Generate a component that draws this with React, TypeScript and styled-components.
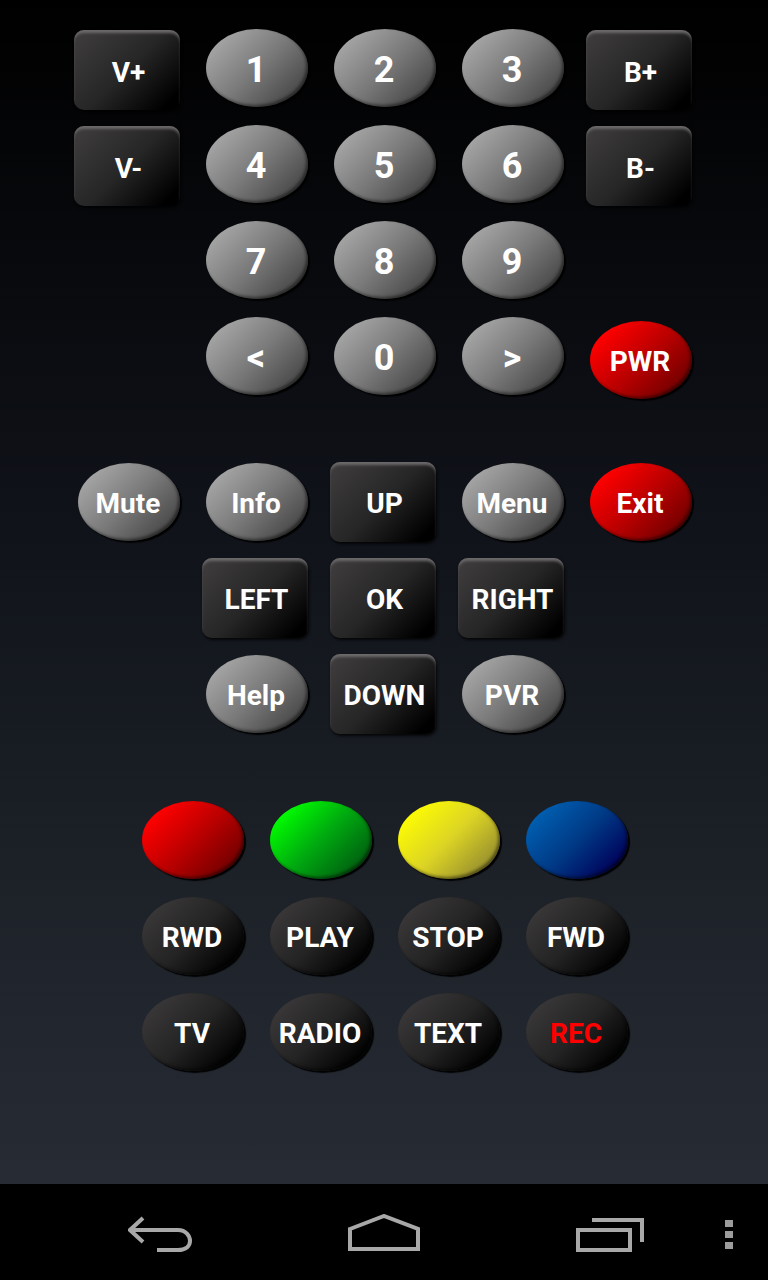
import React from 'react';
import styled, { createGlobalStyle } from 'styled-components';

const GlobalStyle = createGlobalStyle`
  html, body {
    margin: 0;
    padding: 0;
    background: #000;
  }
`;

type Tone = 'grey' | 'black' | 'red' | 'green' | 'yellow' | 'blue';

const tones: Record<Tone, string> = {
  grey: '#a8a8a8 10%, #7a7a7a 50%, #424242 92%',
  black: '#3a3838 10%, #252424 50%, #000 88%',
  red: '#ff0000 14%, #bc0000 50%, #700000 88%',
  green: '#00ff00 12%, #00a810 50%, #005810 90%',
  yellow: '#ffff00 10%, #dcd424 50%, #8c8430 92%',
  blue: '#0062b4 10%, #003a86 50%, #000058 88%',
};

// Styled components

const Screen = styled.div`
  width: 768px;
  height: 1280px;
  display: flex;
  flex-direction: column;
  overflow: hidden;
  font-family: Roboto, "Liberation Sans", sans-serif;
`;

const Panel = styled.main`
  flex: 1;
  padding-top: 20px;
  display: flex;
  flex-direction: column;
  gap: 50px;
  background: linear-gradient(180deg, #000 0%, #10131a 45%, #1d2128 75%, #272b34 100%);
`;

const Keypad = styled.section<{ $columns: number; $inset: number }>`
  display: grid;
  grid-template-columns: repeat(${({ $columns }) => $columns}, 128px);
  grid-auto-rows: 96px;
  padding-left: ${({ $inset }) => $inset}px;
`;

const Gap = styled.div``;

const Oval = styled.button<{ $tone: Tone; $lower?: boolean; $accent?: boolean }>`
  justify-self: center;
  align-self: center;
  width: 102px;
  height: 78px;
  margin: ${({ $lower }) => ($lower ? '7px 0 0' : '0')};
  padding: 4px 2px 0 0;
  border: none;
  border-radius: 50%;
  background: linear-gradient(135deg, ${({ $tone }) => tones[$tone]});
  box-shadow: 2px 2px 1px rgba(0, 0, 0, 0.95), inset -2px -2px 3px rgba(0, 0, 0, 0.45);
  color: ${({ $accent }) => ($accent ? '#ff0000' : '#fff')};
  font: 700 28px/1 Roboto, "Liberation Sans", sans-serif;
`;

const Digit = styled(Oval)`
  font-size: 36px;
`;

const Block = styled.button<{ $lower?: boolean }>`
  justify-self: end;
  align-self: center;
  width: 106px;
  height: 80px;
  margin: ${({ $lower }) => ($lower ? '4px 13px 0 0' : '-1px 13px 0 0')};
  padding: 5px 0 0 3px;
  border: none;
  border-radius: 10px;
  background: linear-gradient(135deg, #3c3a3a 8%, #272626 50%, #000 90%);
  box-shadow: inset 0 4px 3px -1px #6c6a6a, 1px 2px 3px rgba(0, 0, 0, 0.8);
  color: #fff;
  font: 700 28px/1 Roboto, "Liberation Sans", sans-serif;
`;

const NavBar = styled.nav`
  height: 96px;
  flex: none;
  box-sizing: border-box;
  padding: 30px 0 0 128px;
  display: flex;
  align-items: flex-start;
  background: #000;
`;

const NavIcon = styled.svg<{ $gap: number }>`
  display: block;
  flex: none;
  height: 40px;
  margin-right: ${({ $gap }) => $gap}px;
  fill: none;
  stroke: #a8a8a8;
  stroke-width: 4;
`;

const MenuDots = styled.div`
  display: flex;
  flex-direction: column;
  gap: 4px;
  margin-top: 6px;
`;

const MenuDot = styled.span`
  display: block;
  width: 8px;
  height: 7px;
  background: #9c9c9c;
`;

const App = () => (
  <Screen>
    <GlobalStyle />
    <Panel>
      <Keypad $columns={5} $inset={65}>
        <Block $lower>V+</Block>
        <Digit $tone="grey">1</Digit>
        <Digit $tone="grey">2</Digit>
        <Digit $tone="grey">3</Digit>
        <Block $lower>B+</Block>
        <Block $lower>V-</Block>
        <Digit $tone="grey">4</Digit>
        <Digit $tone="grey">5</Digit>
        <Digit $tone="grey">6</Digit>
        <Block $lower>B-</Block>
        <Gap />
        <Digit $tone="grey">7</Digit>
        <Digit $tone="grey">8</Digit>
        <Digit $tone="grey">9</Digit>
        <Gap />
        <Gap />
        <Digit $tone="grey">&lt;</Digit>
        <Digit $tone="grey">0</Digit>
        <Digit $tone="grey">&gt;</Digit>
        <Oval $tone="red" $lower>PWR</Oval>
      </Keypad>

      <Keypad $columns={5} $inset={65}>
        <Oval $tone="grey">Mute</Oval>
        <Oval $tone="grey">Info</Oval>
        <Block>UP</Block>
        <Oval $tone="grey">Menu</Oval>
        <Oval $tone="red">Exit</Oval>
        <Gap />
        <Block>LEFT</Block>
        <Block>OK</Block>
        <Block>RIGHT</Block>
        <Gap />
        <Gap />
        <Oval $tone="grey">Help</Oval>
        <Block>DOWN</Block>
        <Oval $tone="grey">PVR</Oval>
        <Gap />
      </Keypad>

      <Keypad $columns={4} $inset={129}>
        <Oval $tone="red" />
        <Oval $tone="green" />
        <Oval $tone="yellow" />
        <Oval $tone="blue" />
        <Oval $tone="black">RWD</Oval>
        <Oval $tone="black">PLAY</Oval>
        <Oval $tone="black">STOP</Oval>
        <Oval $tone="black">FWD</Oval>
        <Oval $tone="black">TV</Oval>
        <Oval $tone="black">RADIO</Oval>
        <Oval $tone="black">TEXT</Oval>
        <Oval $tone="black" $accent>REC</Oval>
      </Keypad>
    </Panel>

    <NavBar>
      <NavIcon $gap={154} width="66" viewBox="0 0 66 40">
        <path d="M15 4 L2 16 L15 28 M2 16 H50 C58 16 62 22 62 27 C62 32 58 36 50 36 H29" />
      </NavIcon>
      <NavIcon $gap={156} width="72" viewBox="0 0 72 40">
        <path d="M2 15 L36 2 L70 15 V35 H2 Z" />
      </NavIcon>
      <NavIcon $gap={81} width="68" viewBox="0 0 68 40">
        <rect x="2" y="16" width="52" height="20" />
        <path d="M16 6 H66 V28" />
      </NavIcon>
      <MenuDots>
        <MenuDot />
        <MenuDot />
        <MenuDot />
      </MenuDots>
    </NavBar>
  </Screen>
);

export default App;
